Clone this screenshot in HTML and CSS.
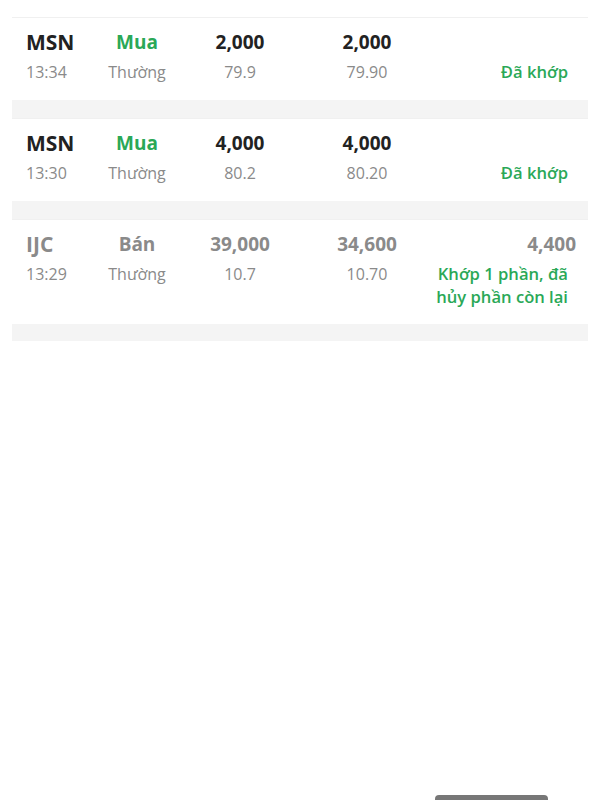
FILE: index.html
```html
<!DOCTYPE html>
<html lang="vi">
<head>
    <meta charset="UTF-8">
    <meta name="viewport" content="width=device-width, initial-scale=1.0">
    <title>Sổ lệnh</title>
    <link rel="stylesheet" href="styles.css">
</head>
<body>

<div class="order-list">
    <div class="order">
        <div class="sym">MSN</div>
        <div class="side buy">Mua</div>
        <div class="num">2,000</div>
        <div class="num">2,000</div>
        <div class="remain"></div>
        <div class="time">13:34</div>
        <div class="sub">Thường</div>
        <div class="sub">79.9</div>
        <div class="sub">79.90</div>
        <div class="status">Đã khớp</div>
    </div>

    <div class="order">
        <div class="sym">MSN</div>
        <div class="side buy">Mua</div>
        <div class="num">4,000</div>
        <div class="num">4,000</div>
        <div class="remain"></div>
        <div class="time">13:30</div>
        <div class="sub">Thường</div>
        <div class="sub">80.2</div>
        <div class="sub">80.20</div>
        <div class="status">Đã khớp</div>
    </div>

    <div class="order muted">
        <div class="sym">IJC</div>
        <div class="side">Bán</div>
        <div class="num">39,000</div>
        <div class="num">34,600</div>
        <div class="remain">4,400</div>
        <div class="time">13:29</div>
        <div class="sub">Thường</div>
        <div class="sub">10.7</div>
        <div class="sub">10.70</div>
        <div class="status">Khớp 1 phần, đã hủy phần còn lại</div>
    </div>
</div>

<div class="home-bar"></div>

</body>
</html>
```

FILE: styles.css
```css
body {
    font-family: "Open Sans", "Noto Sans", sans-serif;
    margin: 0;
    padding: 17px 12px 0;
    background-color: #fff;
    color: #222;
    height: 783px;
    position: relative;
    overflow: hidden;
}

.order-list {
    background-color: #f4f4f4;
    display: flex;
    flex-direction: column;
    gap: 18px;
    padding-bottom: 17px;
}

.order {
    background-color: #fff;
    display: grid;
    grid-template-columns: 66px 90px 116px 138px 1fr;
    row-gap: 4px;
    padding: 10px 12px 16px 14px;
    border-top: 1px solid #f0f0f0;
}

.order > div {
    white-space: nowrap;
}

.sym {
    font-size: 21px;
    font-weight: 700;
    line-height: 28px;
}

.side, .num {
    font-size: 19px;
    font-weight: 700;
    line-height: 28px;
    text-align: center;
}

.buy {
    color: #2aa857;
}

.remain {
    font-size: 19px;
    font-weight: 700;
    line-height: 28px;
    text-align: right;
}

.time, .sub {
    font-size: 16px;
    line-height: 24px;
    color: #8a8a8a;
}

.sub {
    text-align: center;
}

.order > .status {
    font-size: 16.6px;
    font-weight: 600;
    line-height: 23px;
    color: #2aa857;
    text-align: right;
    padding-right: 8px;
    white-space: normal;
}

.muted .sym,
.muted .side,
.muted .num,
.muted .remain {
    color: #8a8a8a;
}

.home-bar {
    position: absolute;
    left: 435px;
    bottom: -3px;
    width: 113px;
    height: 8px;
    border-radius: 4px;
    background-color: #777;
}
```
